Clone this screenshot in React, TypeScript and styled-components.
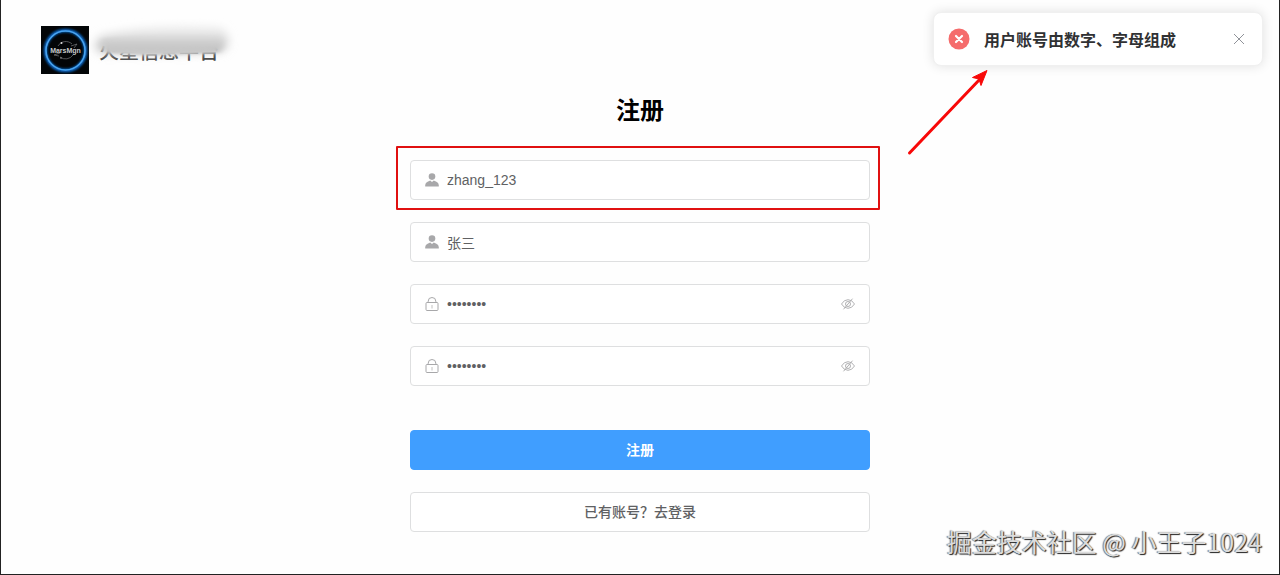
import React, { useState } from "react";
import styled, { createGlobalStyle } from "styled-components";

const GlobalStyle = createGlobalStyle`
  *, *::before, *::after { box-sizing: border-box; }
  body {
    margin: 0;
    background: #fefefe;
    color: #303133;
    font-family: "Liberation Sans", "Noto Sans CJK SC", sans-serif;
    font-size: 14px;
  }
`;

const Page = styled.div`
  position: relative;
  display: flex;
  flex-direction: column;
  min-height: 100vh;
  border: solid #222;
  border-width: 0 1px 1px;
  overflow: hidden;
`;

const Header = styled.header`
  display: flex;
  align-items: center;
  gap: 10px;
  padding: 26px 40px 0;
`;

const Logo = styled.svg`
  width: 48px;
  height: 48px;
`;

const Brand = styled.div`
  position: relative;
  padding-top: 4px;
  color: #444;
  font-size: 20px;
  font-weight: 500;
  line-height: 28px;
`;

const Smudge = styled.svg`
  position: absolute;
  left: -20px;
  top: -16px;
  width: 170px;
  height: 60px;
`;

const Main = styled.main`
  display: flex;
  flex-direction: column;
  align-items: center;
  padding: 20px 20px 42px;
`;

const Form = styled.form`
  display: flex;
  flex-direction: column;
  gap: 22px;
  width: 100%;
  max-width: 460px;
`;

const Title = styled.h1`
  margin: 0 0 10px;
  color: #000;
  font-size: 24px;
  font-weight: 700;
  line-height: 34px;
  text-align: center;
`;

const Field = styled.label`
  position: relative;
  display: flex;
  align-items: center;
  gap: 8px;
  height: 40px;
  padding: 0 14px;
  border: 1px solid #dedfe0;
  border-radius: 4px;
  background: #fff;
  color: #a8a8aa;
`;

const FieldInput = styled.input`
  flex: 1;
  min-width: 0;
  height: 30px;
  padding: 0;
  border: 0;
  outline: 0;
  background: none;
  color: #606163;
  font: inherit;
`;

const Icon = styled.svg`
  flex: none;
  width: 14px;
  height: 14px;
`;

const IconButton = styled.button`
  display: flex;
  padding: 0;
  border: 0;
  background: none;
  color: inherit;
  cursor: pointer;
`;

const Highlight = styled.span`
  position: absolute;
  inset: -15px -11px -11px -15px;
  border: 2px solid #e01010;
  border-radius: 1px;
  pointer-events: none;
`;

const Actions = styled.div`
  display: flex;
  flex-direction: column;
  gap: 22px;
  margin-top: 22px;
`;

const Button = styled.button<{ $primary?: boolean }>`
  height: 40px;
  padding: 0 16px 2px;
  border: 1px solid ${(p) => (p.$primary ? "#409eff" : "#dedfe0")};
  border-radius: 4px;
  background: ${(p) => (p.$primary ? "#409eff" : "#fff")};
  color: ${(p) => (p.$primary ? "#fff" : "#606163")};
  font: ${(p) => (p.$primary ? 700 : 500)} 14px "Liberation Sans", "Noto Sans CJK SC", sans-serif;
  cursor: pointer;
`;

const Notice = styled.div`
  position: absolute;
  top: 12px;
  right: 16px;
  display: flex;
  align-items: center;
  gap: 14px;
  width: 330px;
  padding: 14px;
  border: 1px solid #f0f0f0;
  border-radius: 8px;
  background: #fff;
  box-shadow: 0 0 12px rgba(0, 0, 0, 0.12);
`;

const NoticeTitle = styled.h2`
  flex: 1;
  margin: 0;
  padding-top: 4px;
  font-size: 16px;
  font-weight: 700;
  line-height: 20px;
`;

const NoticeIcon = styled.svg`
  flex: none;
  width: 22px;
  height: 22px;
`;

const NoticeClose = styled(IconButton)`
  padding: 0 2px 0 0;
  color: #909399;
`;

const Arrow = styled.svg`
  position: absolute;
  top: 68px;
  right: 288px;
  width: 84px;
  height: 90px;
  pointer-events: none;
`;

const Watermark = styled.div`
  position: absolute;
  right: 17px;
  bottom: 15px;
  color: #dcdcdc;
  font-family: "Noto Sans CJK SC", sans-serif;
  font-size: 25px;
  line-height: 36px;
  text-shadow: 1px 1px 1px #222, -1px 0 1px #777;
`;

const UserIcon = () => (
  <Icon viewBox="0 0 14 14" fill="currentColor" aria-hidden="true">
    <circle cx="7" cy="3.6" r="3.3" />
    <path d="M.2 13.6v-1.600Q.4 9.600 2.600 8.700L5.200 7.500 7 9l1.800-1.500 2.600 1.200q2.200.9 2.400 3.300v1.600Z" />
  </Icon>
);

const LockIcon = () => (
  <Icon viewBox="0 0 14 14" fill="none" stroke="currentColor" aria-hidden="true">
    <rect x="1" y="5.500" width="12" height="8" rx="1" />
    <path d="M3.200 5.500V4.200a3.800 3.700 0 0 1 7.600 0v1.300" />
    <path d="M7 8v3.500" strokeOpacity="0.7" />
  </Icon>
);

const EyeOffIcon = () => (
  <Icon viewBox="0 0 14 14" fill="none" stroke="currentColor" strokeWidth="0.9" aria-hidden="true">
    <path d="M.5 7Q3 2.700 7 2.700T13.500 7Q11 11.300 7 11.300T.5 7Z" />
    <circle cx="7" cy="7" r="2.500" />
    <path d="M11.500 1.700 2.500 12.300" />
  </Icon>
);

const BrandLogo = () => (
  <Logo viewBox="0 0 48 48" role="img" aria-label="MarsMgn">
    <defs>
      <filter id="glow" x="-20%" y="-20%" width="140%" height="140%">
        <feGaussianBlur stdDeviation="1.200" />
      </filter>
    </defs>
    <rect width="48" height="48" fill="#030507" />
    <circle cx="24.500" cy="24.500" r="20" fill="none" stroke="#0868c8" strokeWidth="3.500" filter="url(#glow)" />
    <circle cx="24.500" cy="24.500" r="19.500" fill="none" stroke="#4aa4ee" strokeWidth="1.600" />
    <g fill="none" stroke="#77797b" strokeWidth="0.700">
      <path d="M17 20a9 9 0 0 1 14-2M32 29a9 9 0 0 1-13 2" />
      <path d="m30 20 6-2-3 4M19 27l-6 2 5 1" />
    </g>
    <circle cx="20.500" cy="17" r="1" fill="#ddd" />
    <circle cx="20" cy="32" r="0.800" fill="#999" />
    <text x="24.500" y="27" textAnchor="middle" fill="#c8cbcd" fontFamily="Liberation Sans, sans-serif" fontSize="7" fontWeight="700">
      MarsMgn
    </text>
  </Logo>
);

function PasswordField({ label }: { label: string }) {
  const [shown, setShown] = useState(false);
  return (
    <Field>
      <LockIcon />
      <FieldInput type={shown ? "text" : "password"} defaultValue="zhang123" aria-label={label} />
      <IconButton type="button" aria-label="显示密码" onClick={() => setShown(!shown)}>
        <EyeOffIcon />
      </IconButton>
    </Field>
  );
}

export default function App() {
  const [notice, setNotice] = useState(true);
  return (
    <>
      <GlobalStyle />
      <Page>
        <Header>
          <BrandLogo />
          <Brand>
            火星信息平台
            <Smudge viewBox="0 0 170 60" aria-hidden="true">
              <defs>
                <filter id="soft" x="-20%" y="-60%" width="140%" height="220%">
                  <feGaussianBlur stdDeviation="5 4" />
                </filter>
                <filter id="edge" x="-20%" y="-60%" width="140%" height="220%">
                  <feGaussianBlur stdDeviation="3 1" />
                </filter>
                <linearGradient id="shade" x1="0" y1="0" x2="0" y2="1">
                  <stop offset="0" stopColor="#f2f2f2" />
                  <stop offset="0.7" stopColor="#c2c2c2" />
                  <stop offset="1" stopColor="#d0d0d0" />
                </linearGradient>
              </defs>
              <path d="M24 20Q80 14 140 17q6 8 0 18L100 36.500 60 37 28 35q-8-6-4-15Z" fill="url(#shade)" filter="url(#edge)" />
              <path d="M22 17Q80 4 142 9q14 12 2 25-60 5-122 2-12-8 0-19Z" fill="url(#shade)" fillOpacity="0.8" filter="url(#soft)" />
            </Smudge>
          </Brand>
        </Header>
        <Main>
          <Form onSubmit={(e) => e.preventDefault()}>
            <Title>注册</Title>
            <Field>
              <UserIcon />
              <FieldInput type="text" defaultValue="zhang_123" aria-label="用户账号" />
              <Highlight />
            </Field>
            <Field>
              <UserIcon />
              <FieldInput type="text" defaultValue="张三" aria-label="用户姓名" />
            </Field>
            <PasswordField label="密码" />
            <PasswordField label="确认密码" />
            <Actions>
              <Button type="submit" $primary>注册</Button>
              <Button type="button">已有账号？去登录</Button>
            </Actions>
          </Form>
        </Main>
        {notice && (
          <Notice role="alert">
            <NoticeIcon viewBox="0 0 22 22" aria-hidden="true">
              <circle cx="11" cy="11" r="10.500" fill="#f56c6c" />
              <path d="m8 8 6 6m0-6-6 6" stroke="#fff" strokeWidth="2.200" strokeLinecap="round" />
            </NoticeIcon>
            <NoticeTitle>用户账号由数字、字母组成</NoticeTitle>
            <NoticeClose type="button" aria-label="关闭" onClick={() => setNotice(false)}>
              <Icon viewBox="0 0 14 14" fill="none" stroke="currentColor" aria-hidden="true">
                <path d="m2 2 10 10M12 2 2 12" />
              </Icon>
            </NoticeClose>
          </Notice>
        )}
        <Arrow viewBox="0 0 84 90" aria-hidden="true">
          <path d="M2.500 85 74 10" stroke="#f80808" strokeWidth="3" strokeLinecap="round" />
          <path d="M80 2.500 65.500 9.500l6.500 1.500 2 6.500Z" fill="#f80808" stroke="#f80808" />
        </Arrow>
        <Watermark>掘金技术社区 @ 小王子1024</Watermark>
      </Page>
    </>
  );
}
